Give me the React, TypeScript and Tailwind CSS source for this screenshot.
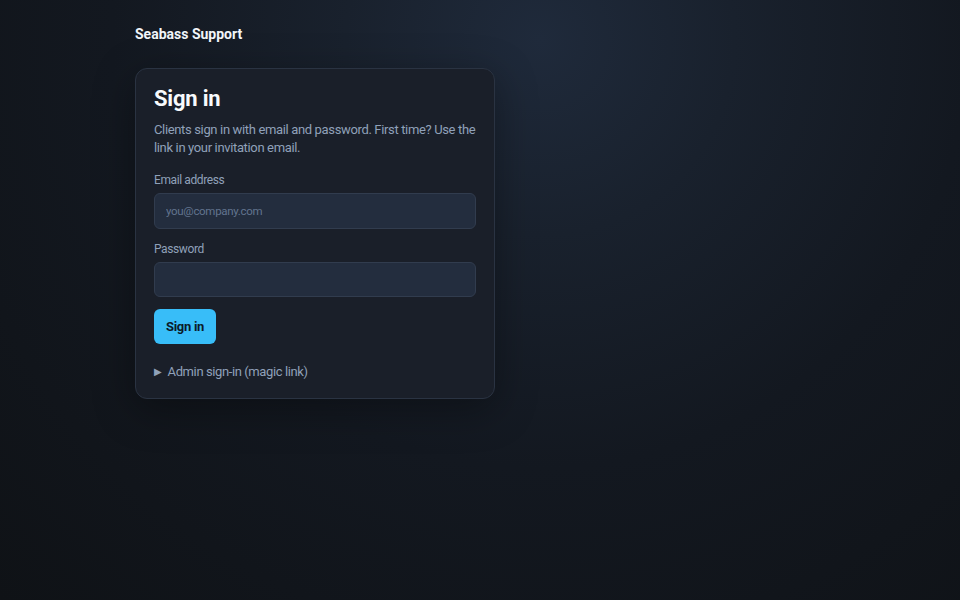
import React from "react";

const App = () => {
  return (
    <div
      className="min-h-screen w-full bg-[#101318] bg-[radial-gradient(circle_at_540px_40px,#1f2a3b_0%,#19212d_25%,#131820_55%,#0f1216_100%)] text-slate-200"
      style={{ fontFamily: 'Roboto, "Liberation Sans", sans-serif' }}
    >
      <div className="px-[135px] pt-[24px]">
        <div className="text-[14px] font-bold text-slate-100 leading-[20px]">
          Seabass Support
        </div>

        <div className="mt-[24px] w-[360px] rounded-[12px] border border-[#2a3342] bg-[#1a1f29] px-[18px] pt-[16px] pb-[17px] shadow-[0_10px_40px_rgba(0,0,0,0.35)]">
          <h1 className="text-[22px] font-bold leading-[28px] tracking-[-0.2px] text-slate-50">Sign in</h1>
          <p className="mt-[8px] text-[13px] leading-[18px] tracking-[-0.35px] text-slate-400">
            Clients sign in with email and password. First time? Use the link in your invitation email.
          </p>

          <form className="mt-[15px] flex flex-col" onSubmit={(e) => e.preventDefault()}>
            <label className="text-[12px] leading-[16px] tracking-[-0.4px] text-slate-400">Email address</label>
            <input
              type="email"
              placeholder="you@company.com"
              className="mt-[5px] h-[36px] w-full rounded-[6px] border border-[#313c4e] bg-[#232d3e] px-[11px] text-[11.5px] tracking-[-0.3px] text-slate-200 placeholder:text-slate-500 outline-none"
            />

            <label className="mt-[12px] text-[12px] leading-[16px] tracking-[-0.4px] text-slate-400">Password</label>
            <input
              type="password"
              className="mt-[5px] h-[35px] w-full rounded-[6px] border border-[#313c4e] bg-[#232d3e] px-[11px] text-[12px] text-slate-200 outline-none"
            />

            <div className="mt-[12px]">
              <button
                type="submit"
                className="h-[35px] rounded-[6px] bg-[#38bdf8] px-[12px] text-[13px] font-bold tracking-[-0.3px] text-[#0b1b2a]"
              >
                Sign in
              </button>
            </div>
          </form>

          <details className="mt-[19px]">
            <summary className="flex cursor-pointer list-none items-center gap-[6px] text-[13px] leading-[18px] tracking-[-0.4px] text-slate-400">
              <span className="text-[10px] text-slate-400">▶</span>
              Admin sign-in (magic link)
            </summary>
          </details>
        </div>
      </div>
    </div>
  );
};

export default App;
